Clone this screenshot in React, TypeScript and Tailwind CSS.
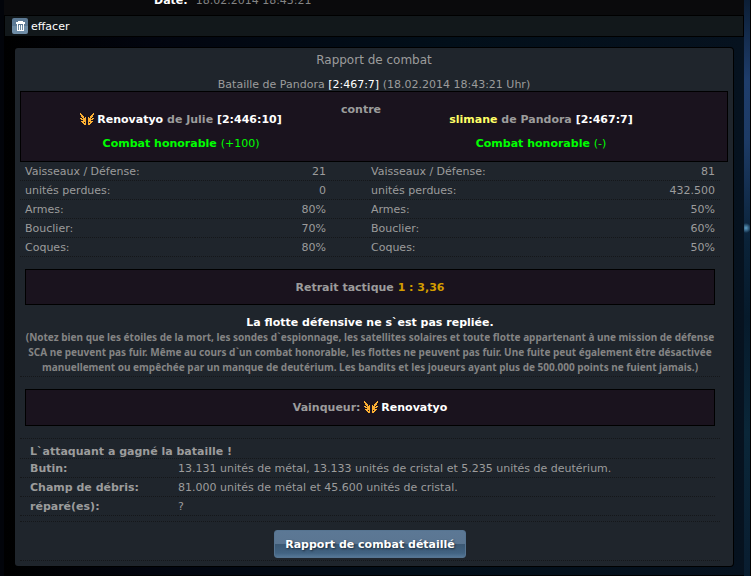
import type { ReactNode } from "react";

const WING_ROWS = [
  "X............X",
  "XX..........XX",
  ".XX........XX.",
  ".XXX......XXX.",
  "..XX.X..X.XX..",
  "XX.XXX..XXX.XX",
  ".XXXXX..XXXXX.",
  "...XXX..XXX...",
  ".XXXXX..XXXXX.",
  "..XX.X..X.XX..",
  "...XXX..XXX...",
  "....XX..XX....",
];

function WingsIcon() {
  return (
    <svg
      viewBox="0 0 14 12"
      shapeRendering="crispEdges"
      fill="#fbaf33"
      aria-hidden="true"
      className="mr-[3px] inline-block h-3 w-3.5 align-[-2px]"
    >
      {WING_ROWS.flatMap((row, y) =>
        [...row].map((cell, x) =>
          cell === "X" ? <rect key={`${x}-${y}`} x={x} y={y} width="1" height="1" /> : null
        )
      )}
    </svg>
  );
}

function TrashIcon() {
  return (
    <svg viewBox="0 0 16 16" shapeRendering="crispEdges" aria-hidden="true" className="h-4 w-4">
      <path
        fill="none"
        stroke="#ffffff"
        d="M6 3.5h5M4 4.5h9M4 5.5h9M5.5 6v7M11.5 6v7M5 12.5h7M7.5 7v5M9.5 7v5"
      />
    </svg>
  );
}

const STATS = [
  { label: "Vaisseaux / Défense:", attacker: "21", defender: "81" },
  { label: "unités perdues:", attacker: "0", defender: "432.500" },
  { label: "Armes:", attacker: "80%", defender: "50%" },
  { label: "Bouclier:", attacker: "70%", defender: "60%" },
  { label: "Coques:", attacker: "80%", defender: "50%" },
];

const RESULTS = [
  {
    label: "Butin:",
    value: "13.131 unités de métal, 13.133 unités de cristal et 5.235 unités de deutérium.",
  },
  { label: "Champ de débris:", value: "81.000 unités de métal et 45.600 unités de cristal." },
  { label: "réparé(es):", value: "?" },
];

function Banner({ className, children }: { className: string; children: ReactNode }) {
  return (
    <div
      className={`mx-[5px] border border-black bg-[#1a131e] pt-[10px] text-center font-bold leading-4 ${className}`}
    >
      {children}
    </div>
  );
}

function StatsTable() {
  return (
    <table className="w-full table-fixed border-separate border-spacing-0 [&_td]:border-b [&_td]:border-dotted [&_td]:border-[#15171a] [&_th]:border-b [&_th]:border-dotted [&_th]:border-[#15171a]">
      <tbody>
        {STATS.map((stat) => (
          <tr key={stat.label} className="h-[19px]">
            <th className="whitespace-nowrap pl-[5px] text-left font-normal">{stat.label}</th>
            <td className="pr-11 text-right">{stat.attacker}</td>
            <th className="whitespace-nowrap pl-px text-left font-normal">{stat.label}</th>
            <td className="pr-[5px] text-right">{stat.defender}</td>
          </tr>
        ))}
      </tbody>
    </table>
  );
}

function ResultTable() {
  return (
    <table className="w-full border-separate border-spacing-0 [&_td]:border-b [&_td]:border-dotted [&_td]:border-[#15171a] [&_th]:border-b [&_th]:border-dotted [&_th]:border-[#15171a]">
      <caption className="border-b border-dotted border-[#15171a] pl-[10px] pt-[6px] text-left font-bold leading-[13px]">
        L`attaquant a gagné la bataille !
      </caption>
      <tbody>
        {RESULTS.map((result) => (
          <tr key={result.label} className="h-[19px]">
            <th className="w-[158px] pl-[10px] text-left font-bold">{result.label}</th>
            <td>{result.value}</td>
          </tr>
        ))}
      </tbody>
    </table>
  );
}

function CombatReport() {
  return (
    <section className="mx-[11px] mt-[11px] rounded-[3px] bg-[#1f252c] px-[5px] pb-[5px] shadow-[0_0_0_1px_#000000]">
      <h1 className="pt-1 text-center text-[12px] leading-4">Rapport de combat</h1>
      <p className="pt-[10px] text-center leading-[13px]">
        Bataille de Pandora{" "}
        <a href="#pandora" className="text-white">
          [2:467:7]
        </a>{" "}
        (18.02.2014 18:43:21 Uhr)
      </p>

      <div className="grid grid-cols-[1fr_40px_1fr] border border-black bg-[#1a131e] pb-[10px] pr-[26px] pt-[10px] text-center font-bold">
        <div className="pt-[10px]">
          <p>
            <WingsIcon />
            <span className="text-white">Renovatyo</span> de Julie{" "}
            <a href="#julie" className="text-white">
              [2:446:10]
            </a>
          </p>
          <p className="pt-[9px] text-[#00ff00]">
            Combat honorable <span className="font-normal">(+100)</span>
          </p>
        </div>
        <p>contre</p>
        <div className="pt-[10px]">
          <p>
            <span className="text-[#ffff66]">slimane</span> de Pandora{" "}
            <a href="#pandora" className="text-white">
              [2:467:7]
            </a>
          </p>
          <p className="pt-[9px] text-[#00ff00]">
            Combat honorable <span className="font-normal">(-)</span>
          </p>
        </div>
      </div>

      <div className="mr-2">
        <StatsTable />

        <div className="border-b border-dotted border-[#15171a] pb-px pt-3">
          <Banner className="pb-2">
            Retrait tactique <span className="text-[#d29d00]">1 : 3,36</span>
          </Banner>
          <p className="pt-[10px] text-center font-bold text-white">
            La flotte défensive ne s`est pas repliée.
          </p>
          <p className="text-center font-['Noto_Sans','DejaVu_Sans',sans-serif] text-[10px] font-bold leading-[15px] text-[#848484]">
            (Notez bien que les étoiles de la mort, les sondes d`espionnage, les satellites solaires
            et toute flotte appartenant à une mission de défense
            <br />
            SCA ne peuvent pas fuir. Même au cours d`un combat honorable, les flottes ne peuvent pas
            fuir. Une fuite peut également être désactivée
            <br />
            manuellement ou empêchée par un manque de deutérium. Les bandits et les joueurs ayant
            plus de 500.000 points ne fuient jamais.)
          </p>
        </div>

        <div className="border-b border-dotted border-[#15171a] py-3">
          <Banner className="pb-[9px]">
            Vainqueur: <WingsIcon />
            <span className="text-white">Renovatyo</span>
          </Banner>
        </div>

        <div className="border-b border-dotted border-[#15171a] pb-[5px] pr-[5px]">
          <ResultTable />
        </div>

        <div className="flex justify-center border-b border-dotted border-[#15171a] pb-[2px] pt-2">
          <button
            type="button"
            className="h-7 rounded-[3px] border border-[#567491] bg-[linear-gradient(#5c7895_0%,#5b7692_48%,#3b5873_52%,#426382_85%,#557796_100%)] px-[10px] font-bold text-white [text-shadow:1px_1px_2px_#1c2b3a]"
          >
            Rapport de combat détaillé
          </button>
        </div>
      </div>
    </section>
  );
}

export default function App() {
  return (
    <div className="flex min-h-screen bg-[#02040a] pl-1 font-['DejaVu_Sans',Verdana,sans-serif] text-[11px] leading-[15px] text-[#9c9c9c]">
      <main className="min-w-0 flex-1 border-b border-black bg-[linear-gradient(90deg,#000000_0%,#02050f_20%,#020f1a_60%,#06121f_100%)] pb-[9px]">
        <header className="flex h-[15px] flex-col justify-end overflow-hidden bg-[#0a0a0c] pb-[7px]">
          <p className="pl-[150px] text-[#848484]">
            <strong className="mr-2 text-white">Date:</strong>
            18.02.2014 18:43:21
          </p>
        </header>
        <div className="border border-black bg-[#12181b] px-[7px] py-px">
          <button type="button" className="flex h-[18px] items-center gap-[3px] text-white">
            <span className="rounded-[2px] bg-[linear-gradient(#5d7a95_50%,#6f8da6_50%)]">
              <TrashIcon />
            </span>
            effacer
          </button>
        </div>
        <CombatReport />
      </main>
      <div className="w-[7px] border-r border-black bg-[radial-gradient(circle_at_2px_228px,#5fa0c8_0px,transparent_5px),linear-gradient(#0c1e35_0%,#1e3d6b_14%,#1d3b66_24%,#0a2238_42%,#061a2b_55%,#0a2638_75%,#091d30_100%)]" />
    </div>
  );
}
